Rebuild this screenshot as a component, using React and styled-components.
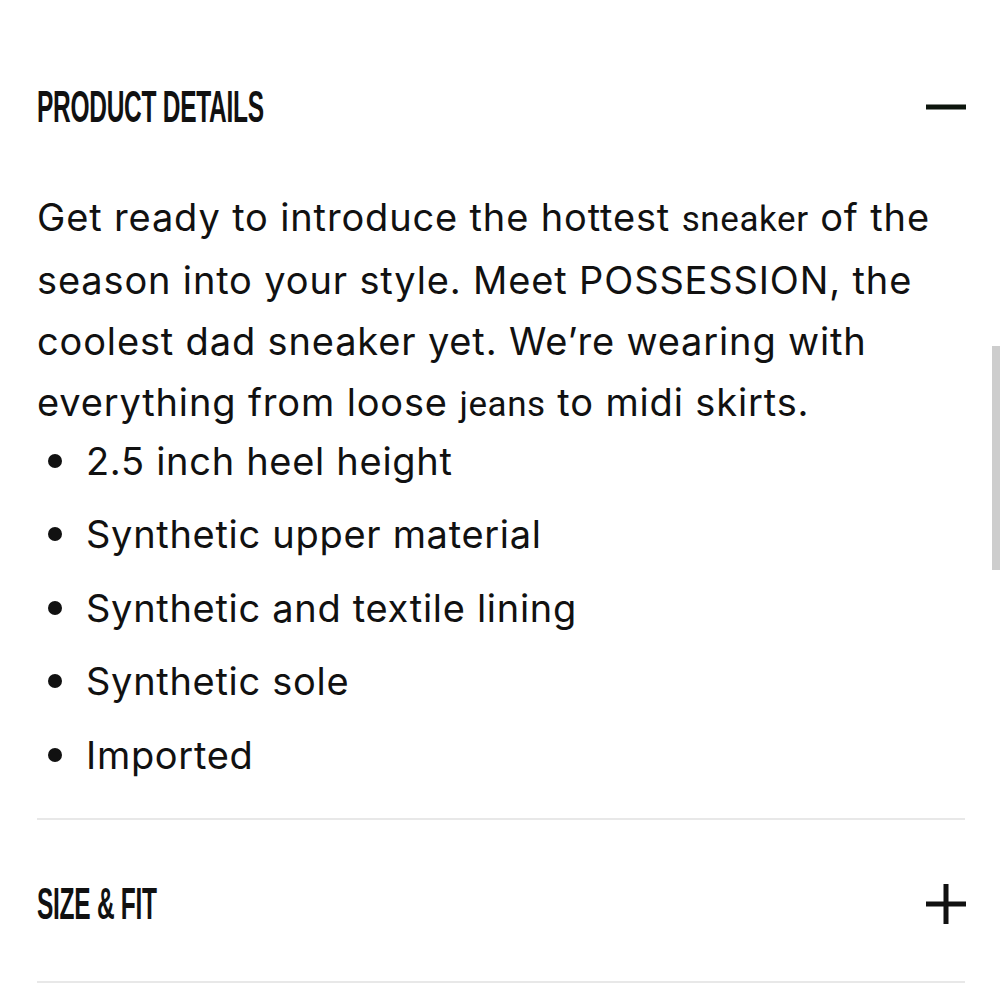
import styled, { createGlobalStyle } from "styled-components";

const GlobalStyle = createGlobalStyle`
  html, body {
    margin: 0;
    padding: 0;
    background: #fff;
  }
  body {
    font-family: "Inter", "Liberation Sans", sans-serif;
    color: #111;
  }
`;

const Page = styled.div`
  width: 1000px;
  height: 1000px;
  position: relative;
  overflow: hidden;
  background: #fff;
`;

const Panel = styled.div`
  padding: 0 35px 0 37px;
`;

// one accordion section: title row + optional body
const Section = styled.section`
  border-bottom: 2px solid #e8e8e8;
`;

const Header = styled.div`
  box-sizing: border-box;
  display: flex;
  align-items: center;
  justify-content: space-between;
  height: ${(p) => p.$height}px;
  padding-top: ${(p) => p.$top || 0}px;
`;

const Title = styled.h2`
  margin: 0;
  font-family: "Liberation Sans", sans-serif;
  font-weight: 700;
  font-size: 44px;
  line-height: 1;
  letter-spacing: -0.5px;
  transform: scaleX(0.557);
  transform-origin: left center;
  white-space: nowrap;
`;

const Toggle = styled.svg`
  width: 40px;
  height: 40px;
  flex: none;
  margin-right: -1px;
`;

const Body = styled.div`
  padding-bottom: 26px;
`;

const Intro = styled.p`
  margin: 0;
  font-size: 38px;
  line-height: 61px;
  letter-spacing: 0.85px;
`;

const Small = styled.span`
  font-family: "Roboto", sans-serif;
  font-size: 35px;
  letter-spacing: 0.6px;
`;

const List = styled.ul`
  margin: -11px 0 0;
  padding: 0;
  list-style: none;
`;

const Item = styled.li`
  display: flex;
  align-items: center;
  height: 73.5px;
  font-size: 38px;
  letter-spacing: 0.7px;

  &::before {
    content: "";
    width: 14px;
    height: 14px;
    border-radius: 50%;
    background: #111;
    margin: 0 24px 0 11px;
    flex: none;
  }
`;

const Scrollbar = styled.div`
  position: absolute;
  right: 0;
  top: 346px;
  width: 8px;
  height: 224px;
  background: #cdcdcd;
`;

function MinusIcon() {
  return (
    <Toggle viewBox="0 0 40 40">
      <rect x="0" y="17.5" width="40" height="5" fill="#0d150d" />
    </Toggle>
  );
}

function PlusIcon() {
  return (
    <Toggle viewBox="0 0 40 40">
      <rect x="0" y="17.5" width="40" height="5" fill="#111" />
      <rect x="17.5" y="0" width="5" height="40" fill="#111" />
    </Toggle>
  );
}

const bullets = [
  "2.5 inch heel height",
  "Synthetic upper material",
  "Synthetic and textile lining",
  "Synthetic sole",
  "Imported",
];

export default function App() {
  return (
    <Page>
      <GlobalStyle />
      <Panel>
        <Section>
          <Header $height={187} $top={27}>
            <Title>PRODUCT DETAILS</Title>
            <MinusIcon />
          </Header>
          <Body>
            <Intro>
              Get ready to introduce the hottest <Small>sneaker</Small> of the
              season into your style. Meet POSSESSION, the coolest dad sneaker
              yet. We’re wearing with everything from loose <Small>jeans</Small>{" "}
              to midi skirts.
            </Intro>
            <List>
              {bullets.map((b) => (
                <Item key={b}>{b}</Item>
              ))}
            </List>
          </Body>
        </Section>
        <Section>
          <Header $height={161} $top={7}>
            <Title>SIZE &amp; FIT</Title>
            <PlusIcon />
          </Header>
        </Section>
      </Panel>
      <Scrollbar />
    </Page>
  );
}
